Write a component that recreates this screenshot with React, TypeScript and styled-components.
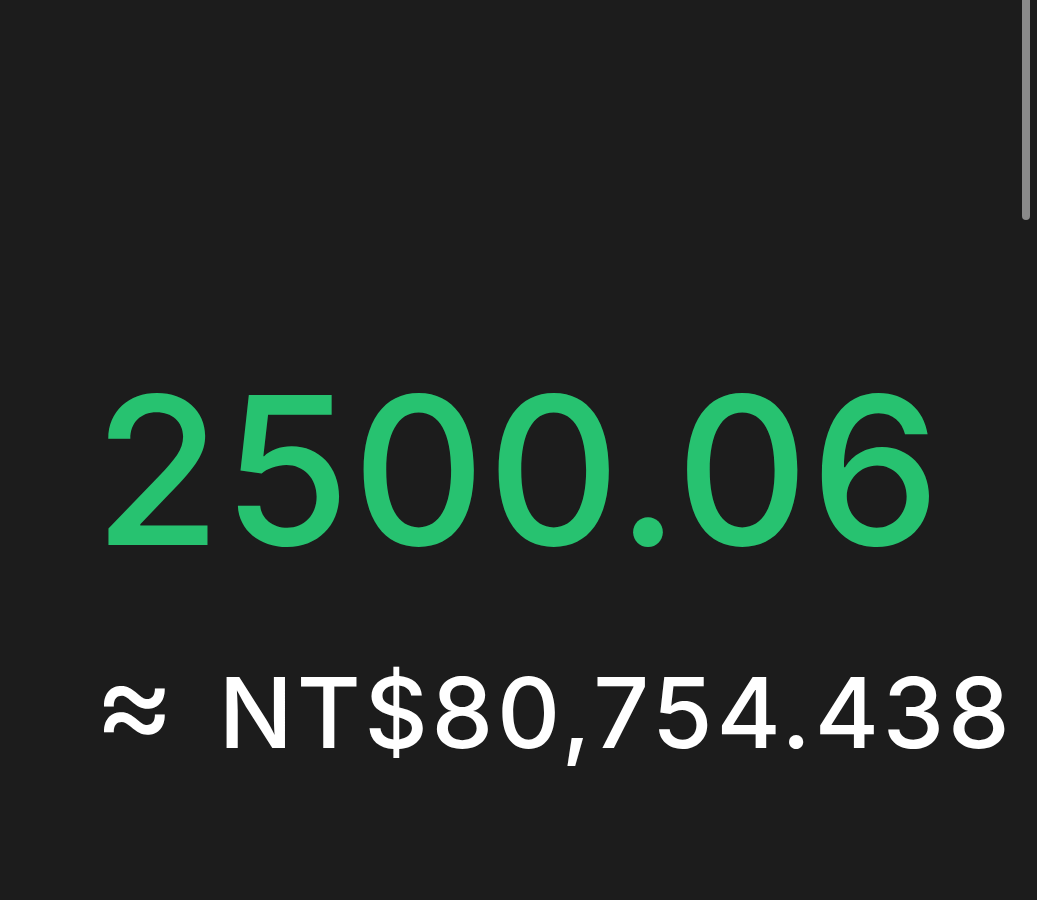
import React from "react";
import styled, { createGlobalStyle } from "styled-components";

const Global = createGlobalStyle`
  html, body { margin: 0; padding: 0; background: #1c1c1c; }
  body { font-family: Inter, "Noto Sans", "Liberation Sans", sans-serif; }
`;

const Screen = styled.div`
  position: relative;
  width: 1037px;
  height: 900px;
  overflow: hidden;
  background: #1c1c1c;
  display: flex;
  flex-direction: column;
  padding: 367px 0 0 94px;
  box-sizing: border-box;
`;

const Amount = styled.div`
  font-size: 206px;
  line-height: 206px;
  font-weight: 500;
  color: #27c270;
  letter-spacing: 2px;
  white-space: nowrap;
`;

const Converted = styled.div`
  margin-top: 82px;
  font-size: 98px;
  line-height: 98px;
  font-weight: 500;
  color: #ffffff;
  white-space: nowrap;
  display: flex;
  align-items: baseline;
  gap: 44px;
`;

const Approx = styled.span`
  font-size: 122px;
  line-height: 98px;
  font-weight: 400;
  position: relative;
  top: -3px;
`;

const Value = styled.span`
  letter-spacing: 3.8px;
`;

const ScrollThumb = styled.div`
  position: absolute;
  top: -6px;
  right: 7px;
  width: 8px;
  height: 226px;
  border-radius: 4px;
  background: #8a8a8a;
`;

export default function App() {
  return (
    <>
      <Global />
      <Screen>
        <Amount>2500.06</Amount>
        <Converted>
          <Approx>≈</Approx>
          <Value>NT$80,754.438</Value>
        </Converted>
        <ScrollThumb />
      </Screen>
    </>
  );
}
